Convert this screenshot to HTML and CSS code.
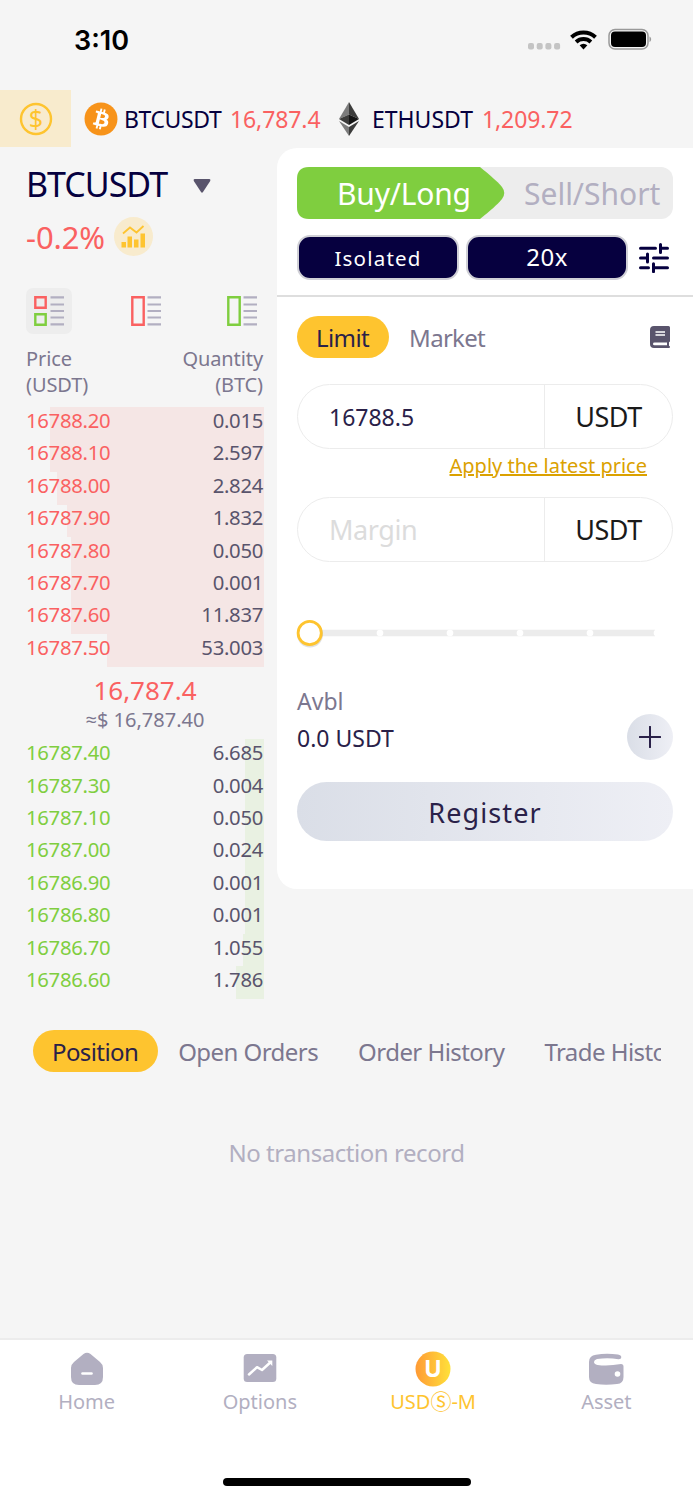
FILE: index.html
```html
<!DOCTYPE html>
<html lang="en">

<head>
    <meta charset="utf-8">
    <title>BTCUSDT</title>
    <link rel="stylesheet" href="styles.css">
</head>

<body>
    <div class="status">
        <span class="time">3:10</span>
        <svg class="status-icons" width="124" height="24" viewBox="0 0 124 24">
            <g fill="#c4c4c4">
                <rect x="0" y="16" width="6" height="6.5" rx="2" />
                <rect x="8.700" y="16" width="6" height="6.5" rx="2" />
                <rect x="17.400" y="16" width="6" height="6.5" rx="2" />
                <rect x="26.100" y="16" width="6" height="6.5" rx="2" />
            </g>
            <g fill="none" stroke="#000" stroke-width="4">
                <path d="M43.500 10.200a17.500 17.500 0 0 1 24 0" />
                <path d="M48.100 14.900a11 11 0 0 1 14.800 0" />
            </g>
            <path d="M51.600 18.300a6 6 0 0 1 7.800 0L55.500 22.500z" />
            <rect x="81" y="2.500" width="39" height="19.500" rx="6" fill="none" stroke="#999" stroke-width="1.500" />
            <rect x="83" y="4.500" width="35" height="15.500" rx="4" />
            <path d="M121.500 9.500c2.200 1 2.200 4.500 0 5.500z" fill="#999" />
        </svg>
    </div>

    <div class="ticker">
        <div class="coin-box">
            <svg width="34" height="34" viewBox="0 0 34 34">
                <circle cx="17" cy="17" r="15" fill="none" stroke="#fec42f" stroke-width="2.400" />
                <text class="dollar" x="17" y="25.500" text-anchor="middle">$</text>
            </svg>
        </div>
        <svg class="btc" width="34" height="34" viewBox="0 0 32 32">
            <circle cx="16" cy="16" r="15.500" fill="#f7931a" />
            <path fill="#fff" d="M23.189 14.020c.314-2.096-1.283-3.223-3.465-3.975l.708-2.840-1.728-.430-.690 2.765c-.454-.114-.920-.220-1.385-.326l.695-2.783L15.596 6l-.708 2.839c-.376-.086-.746-.170-1.104-.260l.002-.009-2.384-.595-.460 1.846s1.283.294 1.256.312c.700.175.826.638.805 1.006l-.806 3.235c.048.012.110.030.180.057l-.183-.045-1.130 4.532c-.086.212-.303.531-.793.410.018.025-1.256-.313-1.256-.313l-.858 1.978 2.250.561c.418.105.828.215 1.231.318l-.715 2.872 1.727.430.708-2.840c.472.127.930.245 1.378.357l-.706 2.828 1.728.430.715-2.866c2.948.558 5.164.333 6.097-2.333.752-2.146-.037-3.385-1.588-4.192 1.130-.260 1.980-1.003 2.207-2.538zm-3.950 5.538c-.533 2.147-4.148.986-5.320.695l.950-3.805c1.172.293 4.929.872 4.370 3.110zm.535-5.569c-.487 1.953-3.495.960-4.470.717l.860-3.450c.975.243 4.118.696 3.610 2.733z" />
        </svg>
        <span class="pair">BTCUSDT</span>
        <span class="rate">16,787.4</span>
        <svg class="eth" width="20" height="34" viewBox="0 0 20 34">
            <path d="M10 0L0 17l10-4.500z" fill="#7c7c7c" />
            <path d="M10 0l10 17-10-4.500z" fill="#3c3c3b" />
            <path d="M0 17l10-4.500V23z" fill="#3c3c3b" />
            <path d="M20 17l-10-4.500V23z" fill="#141414" />
            <path d="M0 19l10 6v9z" fill="#7c7c7c" />
            <path d="M20 19l-10 6v9z" fill="#3c3c3b" />
        </svg>
        <span class="pair wide">ETHUSDT</span>
        <span class="rate">1,209.72</span>
    </div>

    <div class="main">
        <div class="book">
            <div class="symbol">
                <span>BTCUSDT</span>
                <svg width="18" height="15" viewBox="0 0 18 15"><path d="M1.500 0h15q1.500.500.700 2L10 13q-1 1.400-2 0L.800 2Q0 .500 1.500 0z" fill="#59546c" /></svg>
            </div>
            <div class="change">
                <span>-0.2%</span>
                <svg width="39" height="39" viewBox="0 0 39 39">
                    <circle cx="19.500" cy="19.500" r="19.500" fill="#f8ebcd" />
                    <path d="M9 16.500l7-6 6.500 5 7-6.500" fill="none" stroke="#fec42f" stroke-width="1.800" />
                    <path d="M7.500 25h4.500v5.500H7.500zM13.500 19.500H18v11h-4.500zM20 22.500h4.500v8H20zM26.500 16.500H31v14h-4.500z" fill="#fec42f" />
                </svg>
            </div>
            <div class="views">
                <div class="view active">
                    <svg width="30" height="30" viewBox="0 0 30 30">
                        <path d="M1.300 1.300h10.400v10.400H1.300z" fill="none" stroke="#fa6161" stroke-width="2.400" />
                        <path d="M1.300 18.300h10.400v10.400H1.300z" fill="none" stroke="#7fce3f" stroke-width="2.400" />
                        <path d="M16.500 1.300H30M16.500 8.500H30M16.500 15H30M16.500 21.500H30M16.500 28.300H30" stroke="#b2afc1" stroke-width="2.200" />
                    </svg>
                </div>
                <div class="view">
                    <svg width="30" height="30" viewBox="0 0 30 30">
                        <path d="M1.300 1.300h11.400v27.400H1.300z" fill="none" stroke="#fa6161" stroke-width="2.400" />
                        <path d="M16.500 1.300H30M16.500 8.500H30M16.500 15H30M16.500 21.500H30M16.500 28.300H30" stroke="#b2afc1" stroke-width="2.200" />
                    </svg>
                </div>
                <div class="view">
                    <svg width="30" height="30" viewBox="0 0 30 30">
                        <path d="M1.300 1.300h11.400v27.400H1.300z" fill="none" stroke="#7fce3f" stroke-width="2.400" />
                        <path d="M16.500 1.300H30M16.500 8.500H30M16.500 15H30M16.500 21.500H30M16.500 28.300H30" stroke="#b2afc1" stroke-width="2.200" />
                    </svg>
                </div>
            </div>
            <div class="head">
                <div>Price<br>(USDT)</div>
                <div class="right">Quantity<br>(BTC)</div>
            </div>
            <div class="rows asks">
                <div class="row" style="--w: 214px"><span>16788.20</span><b>0.015</b></div>
                <div class="row" style="--w: 214px"><span>16788.10</span><b>2.597</b></div>
                <div class="row" style="--w: 207px"><span>16788.00</span><b>2.824</b></div>
                <div class="row" style="--w: 197px"><span>16787.90</span><b>1.832</b></div>
                <div class="row" style="--w: 193px"><span>16787.80</span><b>0.050</b></div>
                <div class="row" style="--w: 193px"><span>16787.70</span><b>0.001</b></div>
                <div class="row" style="--w: 193px"><span>16787.60</span><b>11.837</b></div>
                <div class="row" style="--w: 157px"><span>16787.50</span><b>53.003</b></div>
            </div>
            <div class="last">
                <div class="last-price">16,787.4</div>
                <div class="last-usd">≈$ 16,787.40</div>
            </div>
            <div class="rows bids">
                <div class="row" style="--w: 19px"><span>16787.40</span><b>6.685</b></div>
                <div class="row" style="--w: 19px"><span>16787.30</span><b>0.004</b></div>
                <div class="row" style="--w: 19px"><span>16787.10</span><b>0.050</b></div>
                <div class="row" style="--w: 19px"><span>16787.00</span><b>0.024</b></div>
                <div class="row" style="--w: 19px"><span>16786.90</span><b>0.001</b></div>
                <div class="row" style="--w: 19px"><span>16786.80</span><b>0.001</b></div>
                <div class="row" style="--w: 21px"><span>16786.70</span><b>1.055</b></div>
                <div class="row" style="--w: 28px"><span>16786.60</span><b>1.786</b></div>
            </div>
        </div>

        <div class="trade">
            <div class="trade-top">
                <div class="sides">
                    <div class="buy">
                        <svg class="buy-shape" width="208" height="52" viewBox="0 0 208 52"><path d="M12 0H183C194 9 200 14 205 20Q209.500 26 205 32C200 38 194 43 183 52H12Q0 52 0 40V12Q0 0 12 0z" fill="#7fce3f" /></svg>
                        <span>Buy/Long</span>
                    </div>
                    <div class="sell">Sell/Short</div>
                </div>
                <div class="modes">
                    <div class="mode isolated">Isolated</div>
                    <div class="mode lever">20x</div>
                    <svg width="30" height="30" viewBox="0 0 30 30">
                        <path d="M1.500 5.300h15M21.500 1.500v8M21.500 5.300h7M1.500 15h7M8.500 11v8M14.500 15h14M1.500 24.700h8M14.500 20.700v8M14.500 24.700h14" fill="none" stroke="#06003f" stroke-width="3" stroke-linecap="round" />
                    </svg>
                </div>
            </div>
            <div class="form">
                <div class="types">
                    <span class="pill">Limit</span>
                    <span class="type">Market</span>
                    <svg width="20" height="22" viewBox="0 0 20 22">
                        <path d="M4 0h14.500Q20 0 20 1.500V15q0 1-1 1.300v3.400q1 .300 1 1.200T19 22H4q-4 0-4-4V4Q0 0 4 0z" fill="#59546c" />
                        <path d="M4.500 16.600H17v2.600H4.500q-1.500 0-1.500-1.300t1.500-1.300z" fill="#fff" />
                        <path d="M5.500 6H15M5.500 9H15" stroke="#fff" stroke-width="1.400" />
                    </svg>
                </div>
                <div class="field">
                    <span class="value">16788.5</span>
                    <span class="unit">USDT</span>
                </div>
                <div class="apply">Apply the latest price</div>
                <div class="field">
                    <span class="hint">Margin</span>
                    <span class="unit">USDT</span>
                </div>
                <svg class="slider" width="376" height="36" viewBox="0 0 376 36">
                    <path d="M13 14.700h345v6.600H13z" fill="#ececec" />
                    <g fill="#fff">
                        <circle cx="83" cy="18" r="3.300" />
                        <circle cx="153" cy="18" r="3.300" />
                        <circle cx="223" cy="18" r="3.300" />
                        <circle cx="293" cy="18" r="3.300" />
                        <circle cx="360" cy="18" r="3.300" />
                    </g>
                    <circle cx="13" cy="19.500" r="13" fill="#000" opacity=".12" />
                    <circle cx="12.700" cy="18" r="11.600" fill="#fff" stroke="#fec42f" stroke-width="2.800" />
                </svg>
                <div class="avbl">Avbl</div>
                <div class="balance">
                    <span>0.0 USDT</span>
                    <div class="plus">
                        <svg width="22" height="22" viewBox="0 0 22 22"><path d="M11 .800v20.400M.800 11h20.400" stroke="#2a2149" stroke-width="2" stroke-linecap="round" /></svg>
                    </div>
                </div>
                <div class="register">Register</div>
            </div>
        </div>
    </div>

    <div class="tabs">
        <span class="pill">Position</span>
        <span class="tab">Open Orders</span>
        <span class="tab">Order History</span>
        <span class="tab">Trade History</span>
    </div>
    <div class="empty">No transaction record</div>

    <div class="nav">
        <div class="nav-item">
            <svg width="36" height="36" viewBox="0 0 36 36">
                <path d="M14.500 3q3.500-2.600 7 0l9.500 8q3 2.500 3 6v9q0 8-8 8H10q-8 0-8-8v-9q0-3.500 3-6z" fill="#b2afc1" />
                <path d="M13.500 22.500h9" stroke="#fff" stroke-width="2.600" stroke-linecap="round" />
            </svg>
            <span>Home</span>
        </div>
        <div class="nav-item">
            <svg width="36" height="36" viewBox="0 0 36 36">
                <rect x="1.700" y="3" width="32.600" height="28" rx="3.500" fill="#b2afc1" />
                <path d="M7 23.500l8-7.300 5 2.800 8.500-7.700" fill="none" stroke="#fff" stroke-width="2.500" stroke-linejoin="round" stroke-linecap="round" />
                <path d="M25 9.500h5.300v5.500z" fill="#fff" />
            </svg>
            <span>Options</span>
        </div>
        <div class="nav-item on">
            <svg width="36" height="36" viewBox="0 0 36 36">
                <defs>
                    <linearGradient id="g" x1="0" x2="1">
                        <stop offset="0" stop-color="#ff9a35" />
                        <stop offset="1" stop-color="#ffe13a" />
                    </linearGradient>
                </defs>
                <circle cx="18" cy="18" r="17.500" fill="url(#g)" />
                <text class="u" x="18" y="26" text-anchor="middle">U</text>
            </svg>
            <span>USD<i>Ⓢ</i>-M</span>
        </div>
        <div class="nav-item">
            <svg width="36" height="36" viewBox="0 0 36 36">
                <path d="M8 3.800Q18 2 30 3.600q3.300.800 3.300 2.700 0 2-2.800 1.900Q20 6.300 9 8q-3 .900-3 2.900t3.500 3Q20 15.300 33 13q2.500 0 2.500 2.500V26q0 6.500-6.500 7-11 1.400-21 0-7-.600-7-7V11q0-6.300 7-7.200z" fill="#b2afc1" />
                <circle cx="29.500" cy="23" r="2.800" fill="#fff" />
            </svg>
            <span>Asset</span>
        </div>
    </div>
    <div class="home-bar"></div>
</body>

</html>
```
FILE: styles.css
```css
* {
    box-sizing: border-box;
}

body {
    margin: 0;
    width: 693px;
    height: 1500px;
    overflow: hidden;
    display: flex;
    flex-direction: column;
    background: #f5f5f5;
    color: #2a2149;
    font-family: "Noto Sans", "Open Sans", sans-serif;
    white-space: nowrap;
}

svg {
    display: block;
    flex: none;
}

.status {
    height: 89px;
    padding: 27px 41px 0 74px;
    display: flex;
    justify-content: space-between;
    align-items: flex-start;
}

.time {
    font: 600 27px/27px Inter, sans-serif;
    color: #000;
}

.ticker {
    height: 59px;
    display: flex;
    align-items: center;
    font-size: 23px;
}

.coin-box {
    width: 71px;
    height: 57px;
    margin-right: 13px;
    background: #f8ebcd;
    display: flex;
    align-items: center;
    justify-content: center;
}

.coin-box svg {
    overflow: visible;
}

.dollar {
    font-size: 25px;
    fill: #fec42f;
}

.pair {
    width: 106px;
    margin-left: 6px;
    color: #06003f;
    letter-spacing: -0.4px;
}

.wide {
    width: 110px;
    letter-spacing: 0;
}

.rate {
    width: 91px;
    color: #fa6161;
    letter-spacing: -0.1px;
}

.eth {
    margin: 0 7px 0 18px;
}

.main {
    height: 850px;
    display: flex;
    align-items: flex-start;
}

.book {
    width: 277px;
    padding: 12px 13px 0 26px;
}

.symbol {
    height: 48px;
    display: flex;
    align-items: center;
    gap: 26px;
    font-size: 34px;
    letter-spacing: -1px;
    color: #06003f;
}

.symbol svg {
    margin-top: 4px;
}

.change {
    height: 57px;
    display: flex;
    align-items: center;
    gap: 9px;
    font-size: 31px;
    letter-spacing: -0.1px;
    color: #fa6161;
}

.views {
    margin: 23px -1px 0 0;
    display: flex;
    justify-content: space-between;
}

.view {
    width: 46px;
    height: 46px;
    padding: 8px;
    border-radius: 7px;
}

.active {
    background: #ededed;
}

.head {
    height: 73px;
    padding: 12px 1px 0 0;
    display: flex;
    justify-content: space-between;
    font-size: 20px;
    line-height: 26px;
    letter-spacing: -0.1px;
    color: #7c778f;
}

.right {
    text-align: right;
}

.row {
    height: 33px;
    margin-bottom: -0.6px;
    padding-right: 1px;
    display: flex;
    justify-content: space-between;
    font-size: 20.3px;
    line-height: 26.5px;
    letter-spacing: -0.3px;
    background: linear-gradient(var(--bar), var(--bar)) right / var(--w) 100% no-repeat;
}

.row b {
    font-weight: 400;
    color: #59546c;
}

.asks {
    --bar: #f5e6e5;
    color: #fa6161;
}

.bids {
    --bar: #e9f1e2;
    color: #7fce3f;
}

.last {
    height: 73px;
    padding-top: 7px;
    text-align: center;
}

.last-price {
    font-size: 26px;
    line-height: 34px;
    color: #fa6161;
}

.last-usd {
    font-size: 20px;
    line-height: 26px;
    color: #7c778f;
}

.trade {
    width: 416px;
    height: 741px;
    background: #fff;
    border-radius: 20px 0 0 20px;
}

.trade-top {
    height: 149px;
    padding: 19px 20px 0;
    border-bottom: 2px solid #dedede;
}

.sides {
    height: 52px;
    display: flex;
    border-radius: 12px;
    background: #ededed;
    font-size: 30px;
    line-height: 54px;
}

.buy {
    position: relative;
    width: 227px;
    padding-left: 40px;
    color: #fff;
}

.buy-shape {
    position: absolute;
    left: 0;
    top: 0;
}

.buy span {
    position: relative;
    letter-spacing: -0.2px;
}

.sell {
    color: #b2afc1;
}

.modes {
    margin-top: 16px;
    display: flex;
    align-items: center;
    gap: 7px;
}

.modes svg {
    margin-left: 4px;
}

.mode {
    width: 162px;
    height: 45px;
    border: 2px solid #d0d0d6;
    border-radius: 13px;
    background: #06003f;
    color: #fff;
    line-height: 40px;
    text-align: center;
}

.isolated {
    font-size: 20.5px;
    letter-spacing: 1.2px;
    line-height: 43px;
}

.lever {
    font-size: 24px;
    letter-spacing: 0.5px;
}

.form {
    padding: 19px 20px 0;
}

.types {
    display: flex;
    align-items: center;
    font-size: 24px;
}

.types svg {
    margin: 0 3px 0 auto;
}

.pill {
    height: 42px;
    padding: 0 20px 0 19px;
    border-radius: 21px;
    background: #fec42f;
    font-size: 24px;
    line-height: 43px;
    letter-spacing: -0.6px;
}

.type {
    margin-left: 20px;
    color: #7c778f;
    letter-spacing: -0.7px;
}

.field {
    height: 65px;
    border: 1.5px solid #ececec;
    border-radius: 33px;
    display: flex;
    line-height: 64px;
    font-size: 27px;
}

.types + .field {
    margin-top: 26px;
}

.value,
.hint {
    width: 247px;
    padding-left: 31px;
    border-right: 1.5px solid #ececec;
}

.value {
    font-size: 23px;
}

.hint {
    color: #dcdcdc;
    letter-spacing: -0.4px;
}

.unit {
    flex: 1;
    text-align: center;
    color: #1a1a1a;
    letter-spacing: -0.5px;
}

.apply {
    height: 48px;
    padding-right: 26px;
    text-align: right;
    font-size: 20px;
    line-height: 34px;
    color: #dba100;
    text-decoration: underline;
}

.slider {
    margin-top: 53px;
    overflow: visible;
}

.avbl {
    margin-top: 34px;
    font-size: 23px;
    line-height: 32px;
    color: #7c778f;
}

.balance {
    display: flex;
    align-items: center;
    justify-content: space-between;
    height: 40px;
    font-size: 23px;
}

.balance span {
    padding-top: 2px;
}

.plus {
    width: 46px;
    height: 46px;
    border-radius: 50%;
    background: linear-gradient(90deg, #dadee7, #eeeff5);
    display: flex;
    align-items: center;
    justify-content: center;
}

.register {
    height: 59px;
    margin-top: 25px;
    border-radius: 30px;
    background: linear-gradient(90deg, #dadee7, #eeeff5);
    font-size: 27px;
    line-height: 62px;
    letter-spacing: 1.1px;
    text-align: center;
}

.tabs {
    width: 628px;
    height: 42px;
    margin: 32px 0 0 33px;
    display: flex;
    overflow: hidden;
}

.tab {
    margin: 0 20px;
    font-size: 24px;
    line-height: 43px;
    letter-spacing: -0.55px;
    color: #7c778f;
}

.empty {
    margin-top: 64px;
    text-align: center;
    font-size: 24px;
    line-height: 34px;
    letter-spacing: -0.45px;
    color: #b2afc1;
}

.nav {
    height: 139px;
    margin-top: auto;
    padding-top: 11px;
    border-top: 2px solid #ececec;
    background: #fff;
    display: flex;
}

.nav-item {
    flex: 1;
    display: flex;
    flex-direction: column;
    align-items: center;
    font-size: 20px;
    line-height: 30px;
    color: #b2afc1;
}

.nav-item i {
    font: 21px/20px "Noto Sans CJK JP", sans-serif;
}

.on {
    color: #fec42f;
}

.u {
    font: 700 23px Inter, sans-serif;
    fill: #fff;
}

.home-bar {
    height: 23px;
    background: #fff;
}

.home-bar::before {
    content: "";
    display: block;
    width: 248px;
    height: 8px;
    margin: 1px auto 0;
    border-radius: 4px;
    background: #000;
}
```
